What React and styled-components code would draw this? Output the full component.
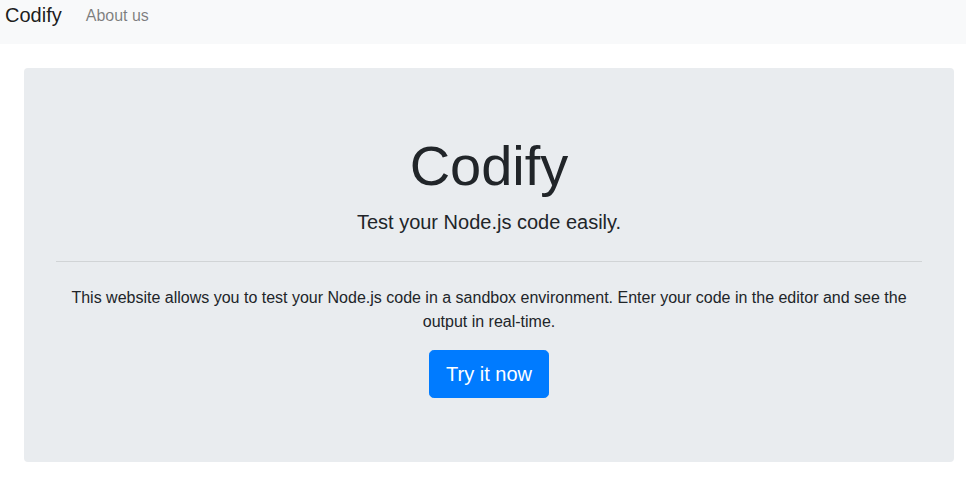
import React from 'react'
import styled, { createGlobalStyle } from 'styled-components'

const GlobalStyle = createGlobalStyle`
    body {
        margin: 0;
        font-family: "Liberation Sans", Arial, sans-serif;
        font-size: 16px;
        line-height: 1.5;
        color: #212529;
        background: #fff;
    }
    * {
        box-sizing: border-box;
    }
`;

const NavBar = styled.nav`
    height: 44px;
    background: #f8f9fa;
    padding: 0 5px;
    display: flex;
    align-items: flex-start;
    `;
const NavRow = styled.div`
    height: 30px;
    display: flex;
    align-items: center;
    `;
const Brand = styled.a`
    font-size: 20px;
    line-height: 30px;
    color: rgba(0, 0, 0, 0.9);
    margin-right: 16px;
    text-decoration: none;
    `;
const NavLink = styled.a`
    font-size: 16px;
    line-height: 24px;
    padding: 2px 8px 0;
    color: rgba(0, 0, 0, 0.5);
    text-decoration: none;
    `;

const Jumbotron = styled.section`
    margin: 24px 12px 0 24px;
    padding: 64px 32px;
    background: #e9ecef;
    border-radius: 4px;
    text-align: center;
    `;
const Title = styled.h1`
    margin: 0 0 8px;
    font-size: 56px;
    font-weight: 300;
    line-height: 1.2;
    `;
const Lead = styled.p`
    margin: 0 0 16px;
    font-size: 20px;
    line-height: 30px;
    `;
const Rule = styled.hr`
    margin: 24px 0;
    border: 0;
    border-top: 1px solid rgba(0, 0, 0, 0.1);
    `;
const Text = styled.p`
    margin: 0 0 16px;
    `;
const Button = styled.a`
    display: inline-block;
    padding: 8px 16px;
    font-size: 20px;
    line-height: 30px;
    color: #fff;
    background: #007bff;
    border: 1px solid #007bff;
    border-radius: 4.8px;
    text-decoration: none;
    `;

export default function App() {
    return (
        <>
            <GlobalStyle />
            <NavBar>
                <NavRow>
                    <Brand href="#">Codify</Brand>
                    <NavLink href="#">About us</NavLink>
                </NavRow>
            </NavBar>
            <Jumbotron>
                <Title>Codify</Title>
                <Lead>Test your Node.js code easily.</Lead>
                <Rule />
                <Text>
                    This website allows you to test your Node.js code in a sandbox environment. Enter your code in the editor and see the output in real-time.
                </Text>
                <Button href="#">Try it now</Button>
            </Jumbotron>
        </>
    )
}
